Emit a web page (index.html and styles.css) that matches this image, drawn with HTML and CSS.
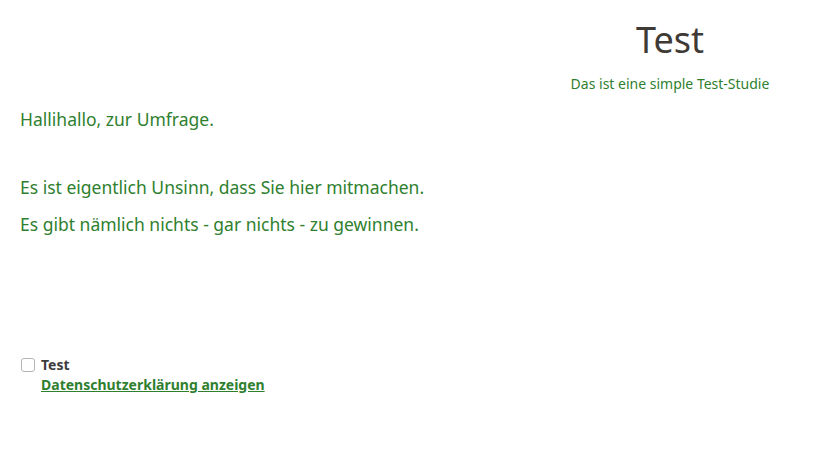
FILE: index.html
```html
<!DOCTYPE html>
<html lang="de">
<head>
    <meta charset="UTF-8">
    <meta name="viewport" content="width=device-width, initial-scale=1.0">
    <title>Test</title>
    <link rel="stylesheet" href="styles.css">
</head>
<body>
    <header class="kopf">
        <div class="kopf-logo"></div>
        <div class="kopf-titel">
            <h1>Test</h1>
            <p class="untertitel">Das ist eine simple Test-Studie</p>
        </div>
    </header>
    <main class="inhalt">
        <p class="absatz">Hallihallo, zur Umfrage.</p>
        <p>Es ist eigentlich Unsinn, dass Sie hier mitmachen.</p>
        <p>Es gibt nämlich nichts - gar nichts - zu gewinnen.</p>
    </main>
    <!-- Datenschutz -->
    <div class="zustimmung">
        <input type="checkbox" id="zustimmen" class="kasten">
        <div class="zustimmung-text">
            <label for="zustimmen">Test</label>
            <a href="#" class="link">Datenschutzerklärung anzeigen</a>
        </div>
    </div>
</body>
</html>
```

FILE: styles.css
```css
body {
    font-family: 'Noto Sans', 'Open Sans', sans-serif;
    background-color: #ffffff;
    color: #2f7f2f; /* gruen */
    margin: 0;
    padding: 0 20px;
}
.kopf {
    display: flex;
    justify-content: space-between;
    margin-right: -20px;
    padding-top: 18px;
}
.kopf-titel {
    width: 296px;
    text-align: center;
}
h1 {
    font-size: 36px;
    font-weight: 400;
    color: #3f3a36;
    margin: 0;
    line-height: 44px;
}
.untertitel {
    font-size: 14px;
    margin: 12px 0 0;
    line-height: 19px;
}
.inhalt {
    padding-top: 14px;
}
.inhalt p {
    font-size: 17.5px;
    line-height: 25px;
    margin: 0 0 11.5px;
}
.inhalt .absatz {
    margin-bottom: 43px;
}
.zustimmung {
    display: flex;
    gap: 6px;
    margin-top: 118px;
}
.kasten {
    appearance: none;
    width: 14px;
    height: 14px;
    margin: 3px 0 0 1px;
    border: 1px solid #b5b5b5;
    border-radius: 3px;
    background: #fff;
}
.zustimmung-text {
    display: flex;
    flex-direction: column;
    font-size: 14px;
    font-weight: 700;
    line-height: 20px;
}
.zustimmung-text label {
    color: #3d3d3d;
}
.link {
    color: #2f7f2f;
    text-decoration: underline;
}
```
